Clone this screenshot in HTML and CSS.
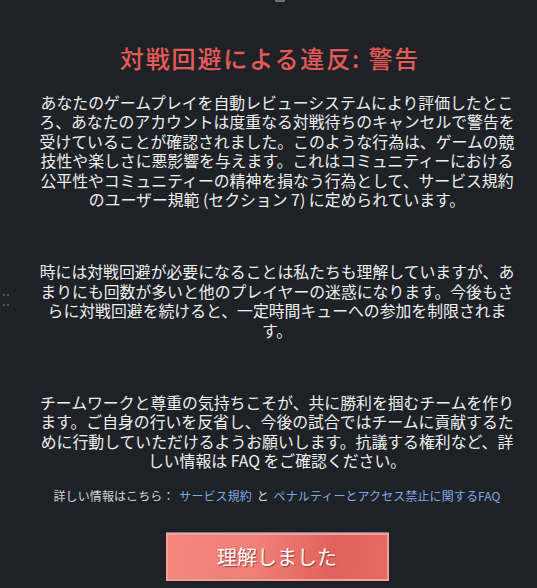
FILE: index.html
```html
<!DOCTYPE html>
<html lang="ja">
<head>
<meta charset="utf-8">
<link rel="stylesheet" href="styles.css">
</head>
<body>
<div class="knob"></div>
<div class="grip"><span></span><span></span></div>
<main class="dialog">
  <h1 class="title">対戦回避による違反: 警告</h1>
  <p class="para">あなたのゲームプレイを自動レビューシステムにより評価したところ、あなたのアカウントは度重なる対戦待ちのキャンセルで警告を受けていることが確認されました。このような行為は、ゲームの競技性や楽しさに悪影響を与えます。これはコミュニティーにおける公平性やコミュニティーの精神を損なう行為として、サービス規約のユーザー規範 (セクション 7) に定められています。</p>
  <p class="para">時には対戦回避が必要になることは私たちも理解していますが、あまりにも回数が多いと他のプレイヤーの迷惑になります。今後もさらに対戦回避を続けると、一定時間キューへの参加を制限されます。</p>
  <p class="para">チームワークと尊重の気持ちこそが、共に勝利を掴むチームを作ります。ご自身の行いを反省し、今後の試合ではチームに貢献するために行動していただけるようお願いします。抗議する権利など、詳しい情報は FAQ をご確認ください。</p>
  <div class="links">詳しい情報はこちら： <a class="link">サービス規約</a> と <a class="link">ペナルティーとアクセス禁止に関するFAQ</a></div>
  <div class="actions"><button class="btn">理解しました</button></div>
</main>
</body>
</html>
```
FILE: styles.css
```css
html, body {
  margin: 0;
  padding: 0;
  background: #1e2227;
  height: 100%;
  overflow: hidden;
}
body {
  position: relative;
  font-family: "Noto Sans CJK JP", "Noto Sans", sans-serif;
  color: #f0f0f0;
}
.knob {
  position: absolute;
  top: 0;
  left: 275px;
  width: 10px;
  height: 2px;
  background: #6d7178;
}
.grip {
  position: absolute;
  left: 3px;
  top: 294px;
  display: flex;
  flex-direction: column;
  gap: 8px;
}
.grip span {
  display: block;
  width: 6px;
  height: 2px;
  border-left: 2px dotted #4b5057;
  border-right: 2px dotted #4b5057;
  box-sizing: border-box;
}
.dialog {
  padding: 42px 20px 0 37px;
  text-align: center;
}
.title {
  margin: 0 0 19px;
  padding-right: 14px;
  font-size: 24px;
  line-height: 32px;
  font-weight: 500;
  color: #e65b57;
  letter-spacing: 1.9px;
}
.para {
  margin: 0 0 53px;
  font-size: 15.85px;
  line-height: 19.4px;
}
.para:nth-of-type(3) {
  margin-bottom: 16px;
}
.links {
  font-size: 12px;
  line-height: 18px;
  color: #d2d4d6;
  word-spacing: 2px;
  letter-spacing: 0.1px;
}
.link {
  color: #7fa9e3;
}
.actions {
  display: flex;
  justify-content: center;
  margin-top: 28px;
}
.btn {
  width: 223px;
  height: 48px;
  box-sizing: border-box;
  border: 2px solid #f4a19b;
  box-shadow: 0 -1px 0 #7c8188;
  background: linear-gradient(100deg, #f5857d 0%, #f08078 40%, #e1615b 75%, #e66a63 100%);
  color: #ffffff;
  font-family: "Noto Sans CJK JP", sans-serif;
  font-size: 20px;
  text-shadow: 1px 1px 1px #9c3a35;
  padding: 0;
  cursor: pointer;
}
```
